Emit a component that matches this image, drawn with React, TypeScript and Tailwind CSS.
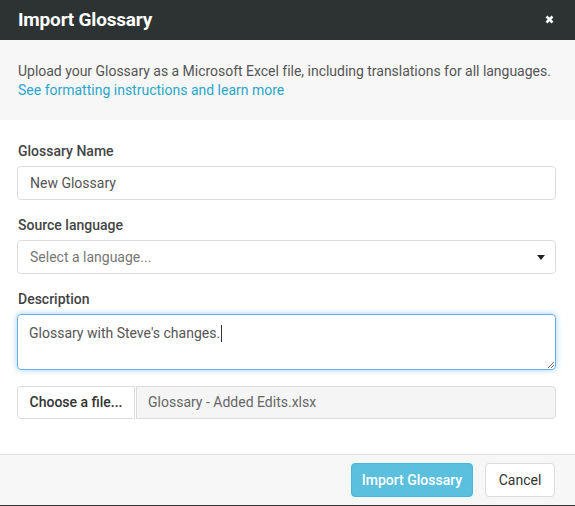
import React from "react";

export default function App() {
  return (
    <div className="w-[575px] h-[506px] bg-white flex flex-col overflow-hidden" style={{ fontFamily: "Roboto, 'Noto Sans', sans-serif" }}>
      <div className="h-[40px] bg-[#2d3233] flex items-center justify-between pl-[18px] pr-[21px] shrink-0">
        <h1 className="text-white text-[19px] font-bold tracking-[-0.2px]">Import Glossary</h1>
        <svg width="9" height="9" viewBox="0 0 9 9" className="mt-[-2px]">
          <path d="M1.5 1.5 L7.5 7.5 M7.5 1.5 L1.5 7.5" stroke="white" strokeWidth="2.6" strokeLinecap="butt" />
        </svg>
      </div>
      <div className="h-[80px] bg-[#f7f7f7] px-[18px] pt-[22px] text-[14px] leading-[19px] text-[#555] shrink-0">
        <p className="tracking-[-0.02px]">Upload your Glossary as a Microsoft Excel file, including translations for all languages.</p>
        <a className="text-[#2ba6cb]">See formatting instructions and learn more</a>
      </div>
      <div className="flex-1 pl-[17px] pr-[19px] pt-[22px]">
        <label className="block text-[14px] font-medium text-[#444] leading-[18px] pl-[1px]">Glossary Name</label>
        <div className="mt-[6px] h-[34px] border border-[#dcdcdc] rounded-[4px] flex items-center px-[12px] text-[14px] text-[#555]">New Glossary</div>
        <label className="block mt-[16px] text-[14px] font-medium text-[#444] leading-[18px] pl-[1px]">Source language</label>
        <div className="mt-[6px] h-[34px] border border-[#dcdcdc] rounded-[4px] flex items-center justify-between pl-[12px] pr-[10px] text-[14px] text-[#777]">
          <span>Select a language...</span>
          <svg width="8" height="5" viewBox="0 0 8 5"><path d="M0 0 L8 0 L4 5 Z" fill="#222" /></svg>
        </div>
        <label className="block mt-[16px] text-[14px] font-medium text-[#444] leading-[18px] pl-[1px]">Description</label>
        <div className="relative mt-[6px] h-[56px] border border-[#66afe9] rounded-[4px] px-[11px] pt-[8px] text-[14px] text-[#555] shadow-[0_0_6px_rgba(102,175,233,0.6)]">
          <span>Glossary with Steve's changes.</span><span className="inline-block w-[1px] h-[17px] bg-[#333] align-middle ml-[1px] -mt-[2px]"></span>
          <svg width="7" height="7" viewBox="0 0 7 7" className="absolute right-[1px] bottom-[1px]">
            <path d="M1 7 L7 1 M4 7 L7 4" stroke="#666" strokeWidth="1" />
          </svg>
        </div>
        <div className="mt-[16px] flex h-[33px]">
          <div className="w-[118px] border border-[#dcdcdc] rounded-l-[4px] bg-white flex items-center justify-center text-[14px] font-medium text-[#333]">Choose a file...</div>
          <div className="flex-1 ml-[1px] border border-[#dcdcdc] rounded-r-[4px] bg-[#f5f5f6] flex items-center px-[11px] text-[14px] text-[#666]">Glossary - Added Edits.xlsx</div>
        </div>
      </div>
      <div className="h-[52px] border-t border-[#e3e3e3] bg-[#f7f7f7] border-b border-b-[#333] flex items-center justify-end gap-[12px] pr-[20px] shrink-0">
        <button className="h-[34px] w-[122px] rounded-[4px] bg-[#5bc0de] border border-[#46b8da] text-white text-[14px] font-medium">Import Glossary</button>
        <button className="h-[34px] w-[70px] rounded-[4px] bg-white border border-[#dcdcdc] text-[#333] text-[14px]">Cancel</button>
      </div>
    </div>
  );
}
